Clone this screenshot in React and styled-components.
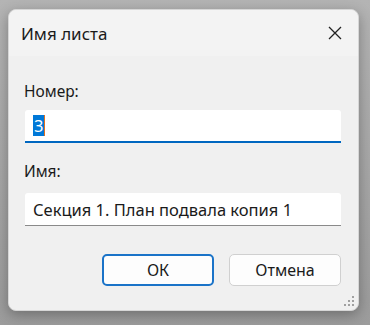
import styled, { createGlobalStyle } from "styled-components";

const GlobalStyle = createGlobalStyle`
  html, body {
    margin: 0;
    padding: 0;
    width: 370px;
    height: 325px;
    overflow: hidden;
    background: linear-gradient(#b4b4b4, #9c9c9c);
    font-family: "Noto Sans", "Open Sans", sans-serif;
  }
`;

const Backdrop = styled.div`
  width: 370px;
  height: 325px;
  padding: 9px 11px 14px 8px;
  box-sizing: border-box;
`;

const Dialog = styled.div`
  position: relative;
  height: 100%;
  background: #f0f0f0;
  border-radius: 8px;
  border: 1px solid #d6d6d6;
  box-sizing: border-box;
  box-shadow: 0 4px 14px rgba(0, 0, 0, 0.3);
  display: flex;
  flex-direction: column;
`;

const TitleBar = styled.div`
  display: flex;
  align-items: center;
  justify-content: space-between;
  height: 46px;
  padding: 0 14px 0 12px;
  background: #f3f3f3;
  border-radius: 8px 8px 0 0;
`;

const Title = styled.div`
  font-size: 17px;
  color: #1a1a1a;
`;

const CloseButton = styled.button`
  border: none;
  background: none;
  padding: 0;
  width: 18px;
  height: 18px;
  display: flex;
  align-items: center;
  justify-content: center;
  cursor: pointer;
`;

const Body = styled.div`
  flex: 1;
  display: flex;
  flex-direction: column;
  padding: 24px 16px 0 15px;
`;

const Label = styled.div`
  font-size: 15.5px;
  color: #1a1a1a;
  margin-bottom: ${(p) => p.$gap}px;
`;

const Field = styled.div`
  height: 33px;
  margin: 0 1px 0 1px;
  background: #fff;
  border-bottom: ${(p) => (p.$active ? "2px solid #0067c0" : "1px solid #8a8a8a")};
  border-radius: 3px 3px 0 0;
  display: flex;
  align-items: center;
  padding: 0 8px;
  box-sizing: border-box;
  margin-bottom: ${(p) => p.$gap || 0}px;
  font-size: 16.5px;
  color: #1a1a1a;
`;

const Selected = styled.span`
  background: #0078d7;
  color: #fff;
  padding: 0 1px;
  line-height: 21px;
  border-right: 1px solid #e07020;
`;

const Buttons = styled.div`
  display: flex;
  justify-content: flex-end;
  gap: 15px;
  margin-top: 28px;
  padding-right: 1px;
`;

const Button = styled.button`
  width: 112px;
  height: 32px;
  border-radius: 5px;
  background: #fdfdfd;
  border: ${(p) => (p.$primary ? "2px solid #1a73c8" : "1px solid #d0d0d0")};
  box-sizing: border-box;
  font-family: inherit;
  font-size: 16px;
  color: #1a1a1a;
`;

const Grip = styled.svg`
  position: absolute;
  right: 3px;
  bottom: 3px;
`;

export default function App() {
  return (
    <>
      <GlobalStyle />
      <Backdrop>
        <Dialog>
          <TitleBar>
            <Title>Имя листа</Title>
            <CloseButton>
              <svg width="16" height="16" viewBox="0 0 16 16">
                <path d="M2 2L14 14M14 2L2 14" stroke="#222" strokeWidth="1.3" />
              </svg>
            </CloseButton>
          </TitleBar>
          <Body>
            <Label $gap={8}>Номер:</Label>
            <Field $active $gap={17}>
              <Selected>3</Selected>
            </Field>
            <Label $gap={11}>Имя:</Label>
            <Field>Секция 1. План подвала копия 1</Field>
            <Buttons>
              <Button $primary>ОК</Button>
              <Button>Отмена</Button>
            </Buttons>
          </Body>
          <Grip width="12" height="12" viewBox="0 0 12 12">
            {[
              [9, 1],
              [9, 5],
              [5, 5],
              [9, 9],
              [5, 9],
              [1, 9],
            ].map(([x, y]) => (
              <rect key={`${x}-${y}`} x={x} y={y} width="2" height="2" fill="#a0a0a0" />
            ))}
          </Grip>
        </Dialog>
      </Backdrop>
    </>
  );
}
